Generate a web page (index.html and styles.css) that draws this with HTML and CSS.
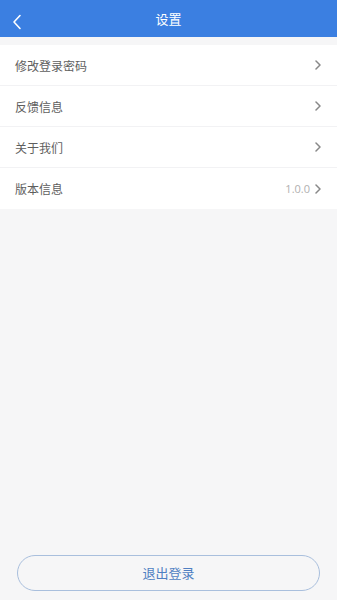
FILE: index.html
```html
<!DOCTYPE html>
<html lang="zh">
<head>
    <meta charset="UTF-8">
    <meta name="viewport" content="width=device-width, initial-scale=1.0">
    <link rel="stylesheet" href="styles.css">
    <title>设置</title>
</head>
<body>
    <div class="header">
        <div class="back">
            <svg width="10" height="16" viewBox="0 0 10 16"><path d="M8 1.5 L2 8 L8 14.5" fill="none" stroke="#ffffff" stroke-width="1.6" stroke-linecap="round" stroke-linejoin="round"/></svg>
        </div>
        <div class="title">设置</div>
    </div>

    <div class="list">
        <div class="row">
            <span class="label">修改登录密码</span>
            <span class="right"><svg class="arrow" width="6" height="10" viewBox="0 0 6 10"><path d="M1 1 L5 5 L1 9" fill="none" stroke="#888" stroke-width="1.5" stroke-linecap="round" stroke-linejoin="round"/></svg></span>
        </div>
        <div class="row">
            <span class="label">反馈信息</span>
            <span class="right"><svg class="arrow" width="6" height="10" viewBox="0 0 6 10"><path d="M1 1 L5 5 L1 9" fill="none" stroke="#888" stroke-width="1.5" stroke-linecap="round" stroke-linejoin="round"/></svg></span>
        </div>
        <div class="row">
            <span class="label">关于我们</span>
            <span class="right"><svg class="arrow" width="6" height="10" viewBox="0 0 6 10"><path d="M1 1 L5 5 L1 9" fill="none" stroke="#888" stroke-width="1.5" stroke-linecap="round" stroke-linejoin="round"/></svg></span>
        </div>
        <div class="row">
            <span class="label">版本信息</span>
            <span class="right"><span class="version">1.0.0</span><svg class="arrow" width="6" height="10" viewBox="0 0 6 10"><path d="M1 1 L5 5 L1 9" fill="none" stroke="#888" stroke-width="1.5" stroke-linecap="round" stroke-linejoin="round"/></svg></span>
        </div>
    </div>

    <div class="spacer"></div>

    <div class="footer">
        <div class="logout">退出登录</div>
    </div>
</body>
</html>
```

FILE: styles.css
```css
body {
    font-family: "Noto Sans CJK SC", "Noto Sans", sans-serif;
    margin: 0;
    padding: 0;
    background-color: #f6f6f7;
    height: 600px;
    display: flex;
    flex-direction: column;
}

.header {
    position: relative;
    display: flex;
    justify-content: center;
    align-items: center;
    height: 37px;
    background-color: #3b7fe1;
    color: white;
}

.back {
    position: absolute;
    left: 12px;
    top: 11px;
    height: 16px;
}

.title {
    font-size: 13px;
}

.list {
    margin-top: 8px;
    background-color: white;
}

.row {
    display: flex;
    justify-content: space-between;
    align-items: center;
    height: 41px;
    padding: 0 16px 0 15px;
    border-bottom: 1px solid #f2f2f4;
    box-sizing: border-box;
}

.row:last-child {
    border-bottom: none;
}

.label {
    font-size: 12px;
    color: #5e5e5e;
}

.right {
    display: flex;
    align-items: center;
    gap: 5px;
}

.version {
    font-family: "Open Sans", sans-serif;
    font-size: 11px;
    color: #b0b0b0;
}

.spacer {
    flex: 1;
}

.footer {
    padding: 0 17px 9px 17px;
}

.logout {
    height: 36px;
    border: 1.5px solid #a9bfdd;
    border-radius: 18px;
    box-sizing: border-box;
    display: flex;
    justify-content: center;
    align-items: center;
    font-size: 13px;
    color: #4f7fc2;
    padding-bottom: 2px;
}
```
